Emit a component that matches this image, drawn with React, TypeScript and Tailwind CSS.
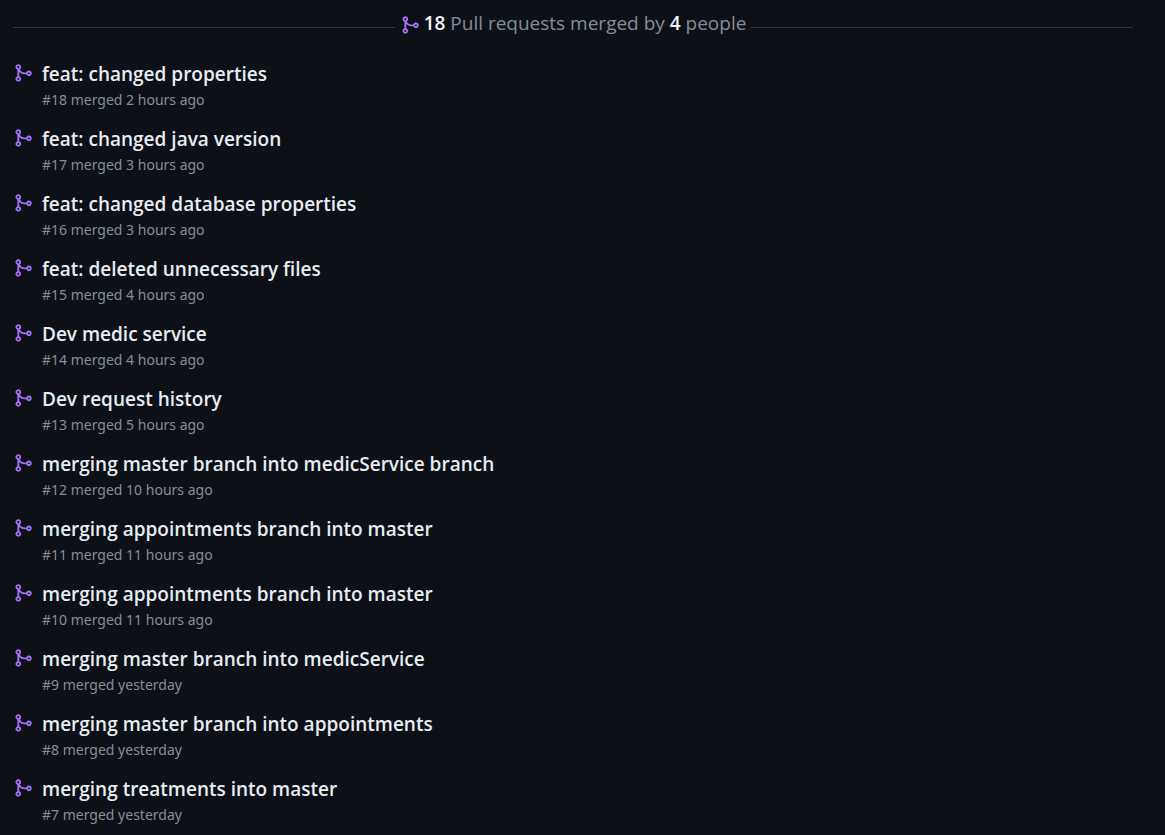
const pulls = [
  { id: 18, title: "feat: changed properties", when: "2 hours ago" },
  { id: 17, title: "feat: changed java version", when: "3 hours ago" },
  { id: 16, title: "feat: changed database properties", when: "3 hours ago" },
  { id: 15, title: "feat: deleted unnecessary files", when: "4 hours ago" },
  { id: 14, title: "Dev medic service", when: "4 hours ago" },
  { id: 13, title: "Dev request history", when: "5 hours ago" },
  { id: 12, title: "merging master branch into medicService branch", when: "10 hours ago" },
  { id: 11, title: "merging appointments branch into master", when: "11 hours ago" },
  { id: 10, title: "merging appointments branch into master", when: "11 hours ago" },
  { id: 9, title: "merging master branch into medicService", when: "yesterday" },
  { id: 8, title: "merging master branch into appointments", when: "yesterday" },
  { id: 7, title: "merging treatments into master", when: "yesterday" },
];

function MergeIcon() {
  return (
    <svg viewBox="0 0 16 16" fill="currentColor" aria-hidden="true" className="size-5 shrink-0 text-[#a371f7]">
      <path d="M5.45 5.154A4.25 4.25 0 0 0 9.25 7.5h1.378a2.251 2.251 0 1 1 0 1.5H9.25A5.734 5.734 0 0 1 5 7.123v3.505a2.25 2.25 0 1 1-1.5 0V5.372a2.25 2.25 0 1 1 1.95-.218ZM4.25 13.5a.75.75 0 1 0 0-1.5.75.75 0 0 0 0 1.5Zm8.5-4.5a.75.75 0 1 0 0-1.5.75.75 0 0 0 0 1.5ZM5 3.25a.75.75 0 1 0 0 .005V3.25Z" />
    </svg>
  );
}

export default function App() {
  return (
    <main className="min-h-screen bg-[#0d1117] pl-[13px] pr-8 font-['Open_Sans','Noto_Sans',sans-serif] text-[#848d97]">
      <h3 className="flex h-[46px] items-center gap-[5px] text-[19px] leading-6">
        <span className="mt-2 h-px flex-1 bg-[#30363d]" />
        <span className="flex items-center gap-1">
          <span className="pt-1">
            <MergeIcon />
          </span>
          <span>
            <strong className="font-semibold text-[#f0f6fc]">18</strong> Pull requests merged by{" "}
            <strong className="font-semibold text-[#f0f6fc]">4</strong> people
          </span>
        </span>
        <span className="mt-2 h-px flex-1 bg-[#30363d]" />
      </h3>
      <ul className="pt-[14px]">
        {pulls.map((pull) => (
          <li key={pull.id} className="flex h-[65px] gap-[9px]">
            <span className="pt-[3px]">
              <MergeIcon />
            </span>
            <div>
              <a href={`#${pull.id}`} className="block text-[19px] font-semibold leading-7 text-[#e6edf3]">
                {pull.title}
              </a>
              <p className="font-['Noto_Sans',sans-serif] text-[14px] leading-6">
                #{pull.id} merged {pull.when}
              </p>
            </div>
          </li>
        ))}
      </ul>
    </main>
  );
}
